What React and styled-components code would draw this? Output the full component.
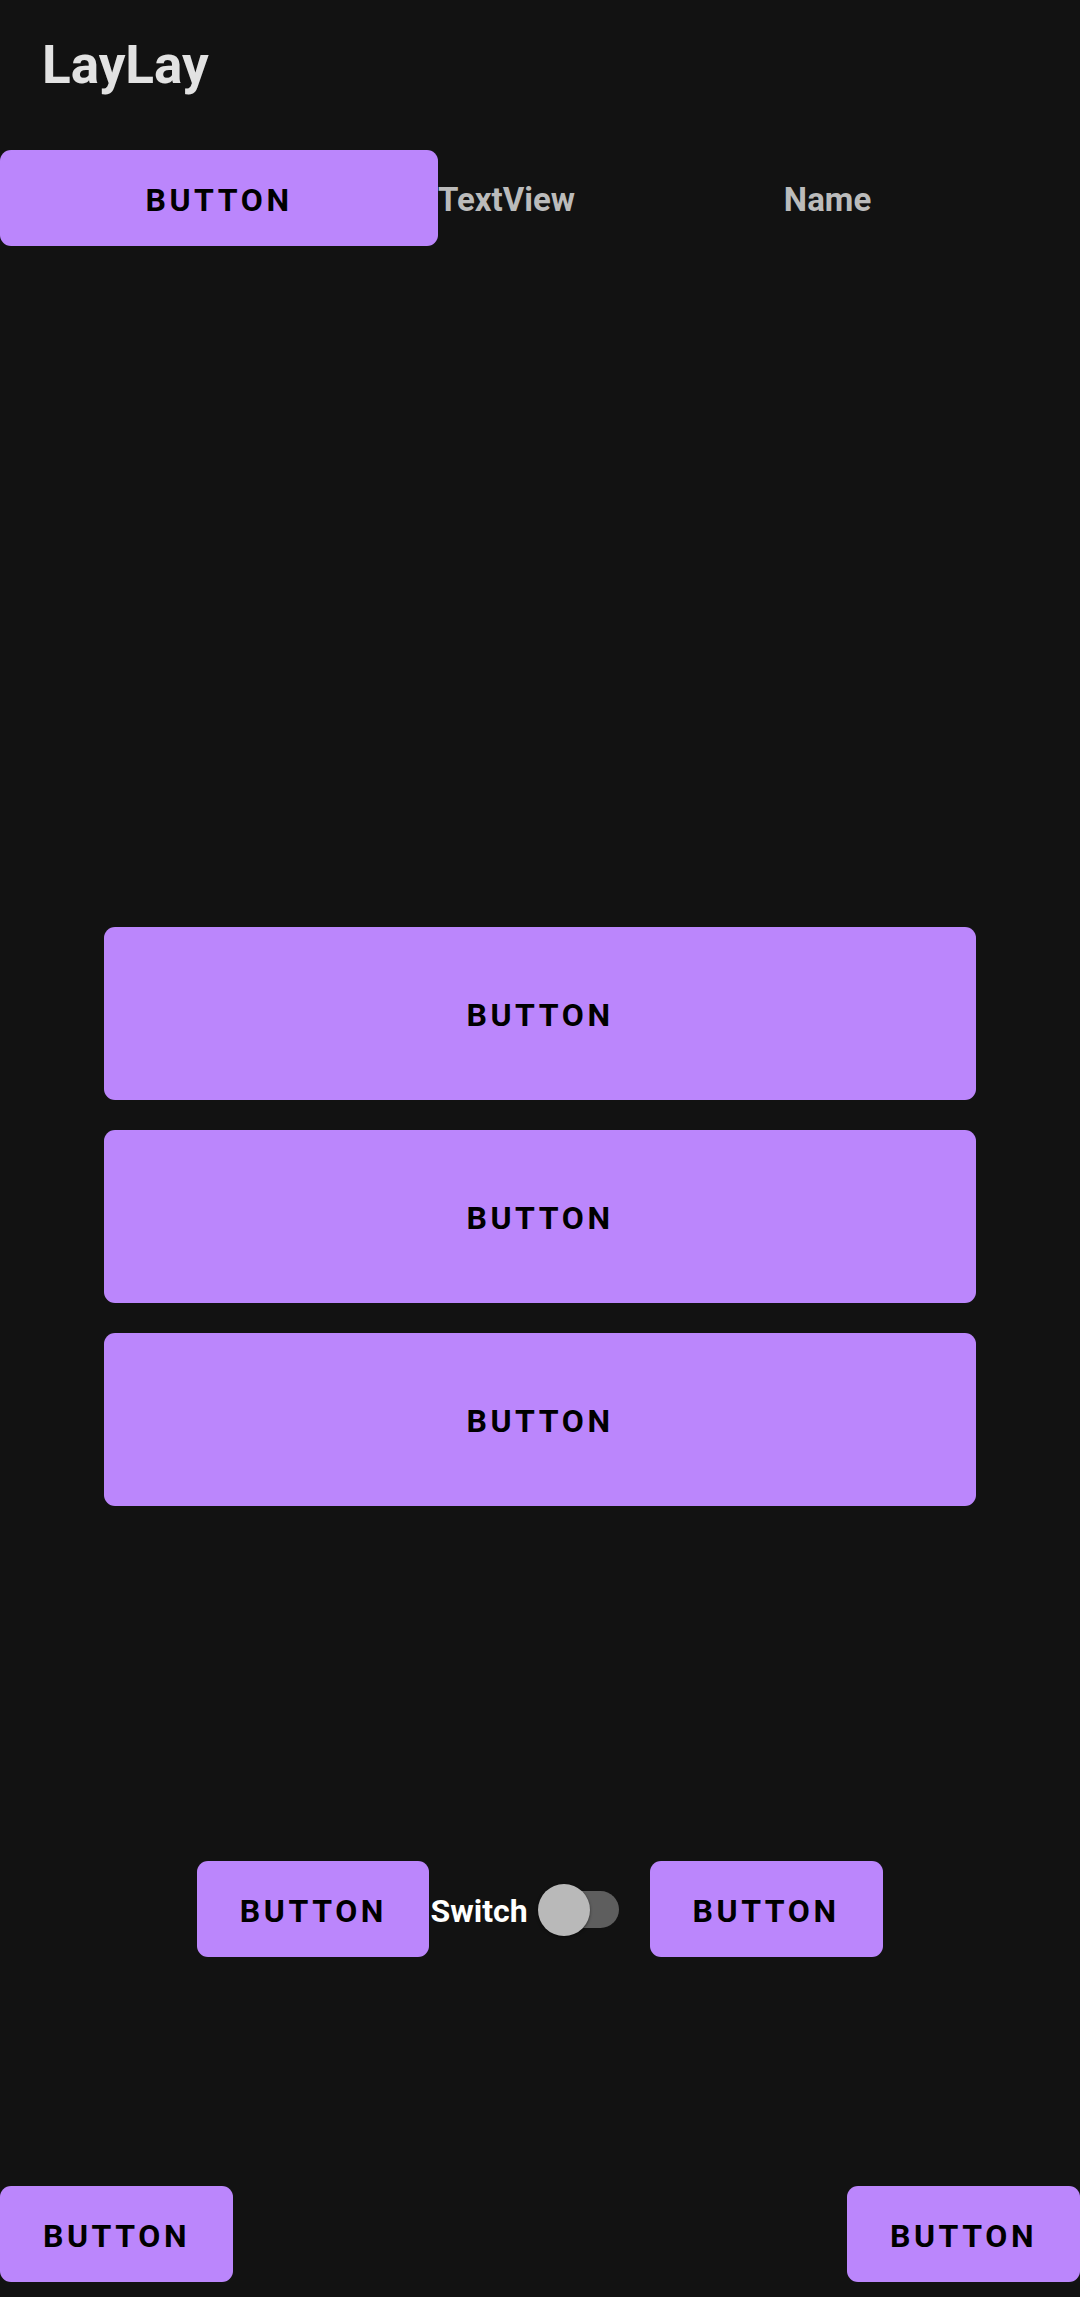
import React from 'react'
import styled, { createGlobalStyle } from 'styled-components'

const GlobalStyle = createGlobalStyle`
  html, body {
    margin: 0;
    padding: 0;
    background: #121212;
  }
  body {
    font-family: Roboto, 'Liberation Sans', sans-serif;
  }
`

const Page = styled.div`
  background: #121212;
  display: flex;
  flex-direction: column;
  height: 2297px;
  overflow: hidden;
  width: 1080px;
`

const TitleBar = styled.div`
  align-items: center;
  box-sizing: border-box;
  color: #e2e2e2;
  display: flex;
  font-size: 53px;
  font-weight: 700;
  height: 127px;
  padding-left: 42px;
  padding-top: 2px;
`

const Button = styled.div`
  align-items: center;
  background: #bb86fc;
  border-radius: 11px;
  box-sizing: border-box;
  color: #000;
  display: flex;
  flex-shrink: 0;
  font-size: 32px;
  font-weight: 700;
  height: ${props => props.$height || 96}px;
  justify-content: center;
  letter-spacing: 3.6px;
  padding-top: 3px;
  width: ${props => (props.$width ? props.$width + 'px' : '100%')};
`

const TopRow = styled.div`
  align-items: center;
  display: flex;
  height: 96px;
  margin-top: 23px;
`

const Label = styled.div`
  color: ${props => props.$color || '#bbbbbb'};
  font-size: ${props => props.$size || 33}px;
  font-weight: 700;
  padding-top: 3px;
`

const NameCell = styled(Label)`
  flex: 1;
  text-align: center;
`

const Stack = styled.div`
  display: flex;
  flex-direction: column;
  gap: 30px;
  margin-top: 681px;
  padding: 0 104px;
`

const SwitchRow = styled.div`
  align-items: center;
  display: flex;
  height: 96px;
  justify-content: center;
  margin-top: 355px;
`

const SwitchLabel = styled(Label)`
  margin-left: 1px;
`

const SwitchBox = styled.div`
  height: 52px;
  position: relative;
  width: 122px;
`

const Track = styled.div`
  background: #5e5e5e;
  border-radius: 19px;
  height: 37px;
  left: 23px;
  position: absolute;
  top: 8px;
  width: 68px;
`

const Thumb = styled.div`
  background: #b9b9b9;
  border-radius: 50%;
  box-shadow: 0 1px 3px rgba(0, 0, 0, 0.5);
  height: 52px;
  left: 10px;
  position: absolute;
  top: 1px;
  width: 52px;
`

const BottomRow = styled.div`
  display: flex;
  justify-content: space-between;
  margin-top: 229px;
`

export default function App () {
  return (
    <Page>
      <GlobalStyle />
      <TitleBar>LayLay</TitleBar>
      <TopRow>
        <Button $width={438}>BUTTON</Button>
        <Label>TextView</Label>
        <NameCell>Name</NameCell>
      </TopRow>
      <Stack>
        <Button $height={173}>BUTTON</Button>
        <Button $height={173}>BUTTON</Button>
        <Button $height={173}>BUTTON</Button>
      </Stack>
      <SwitchRow>
        <Button $width={232}>BUTTON</Button>
        <SwitchLabel $color='#ffffff' $size={32}>Switch</SwitchLabel>
        <SwitchBox>
          <Track />
          <Thumb />
        </SwitchBox>
        <Button $width={233}>BUTTON</Button>
      </SwitchRow>
      <BottomRow>
        <Button $width={233}>BUTTON</Button>
        <Button $width={233}>BUTTON</Button>
      </BottomRow>
    </Page>
  )
}
